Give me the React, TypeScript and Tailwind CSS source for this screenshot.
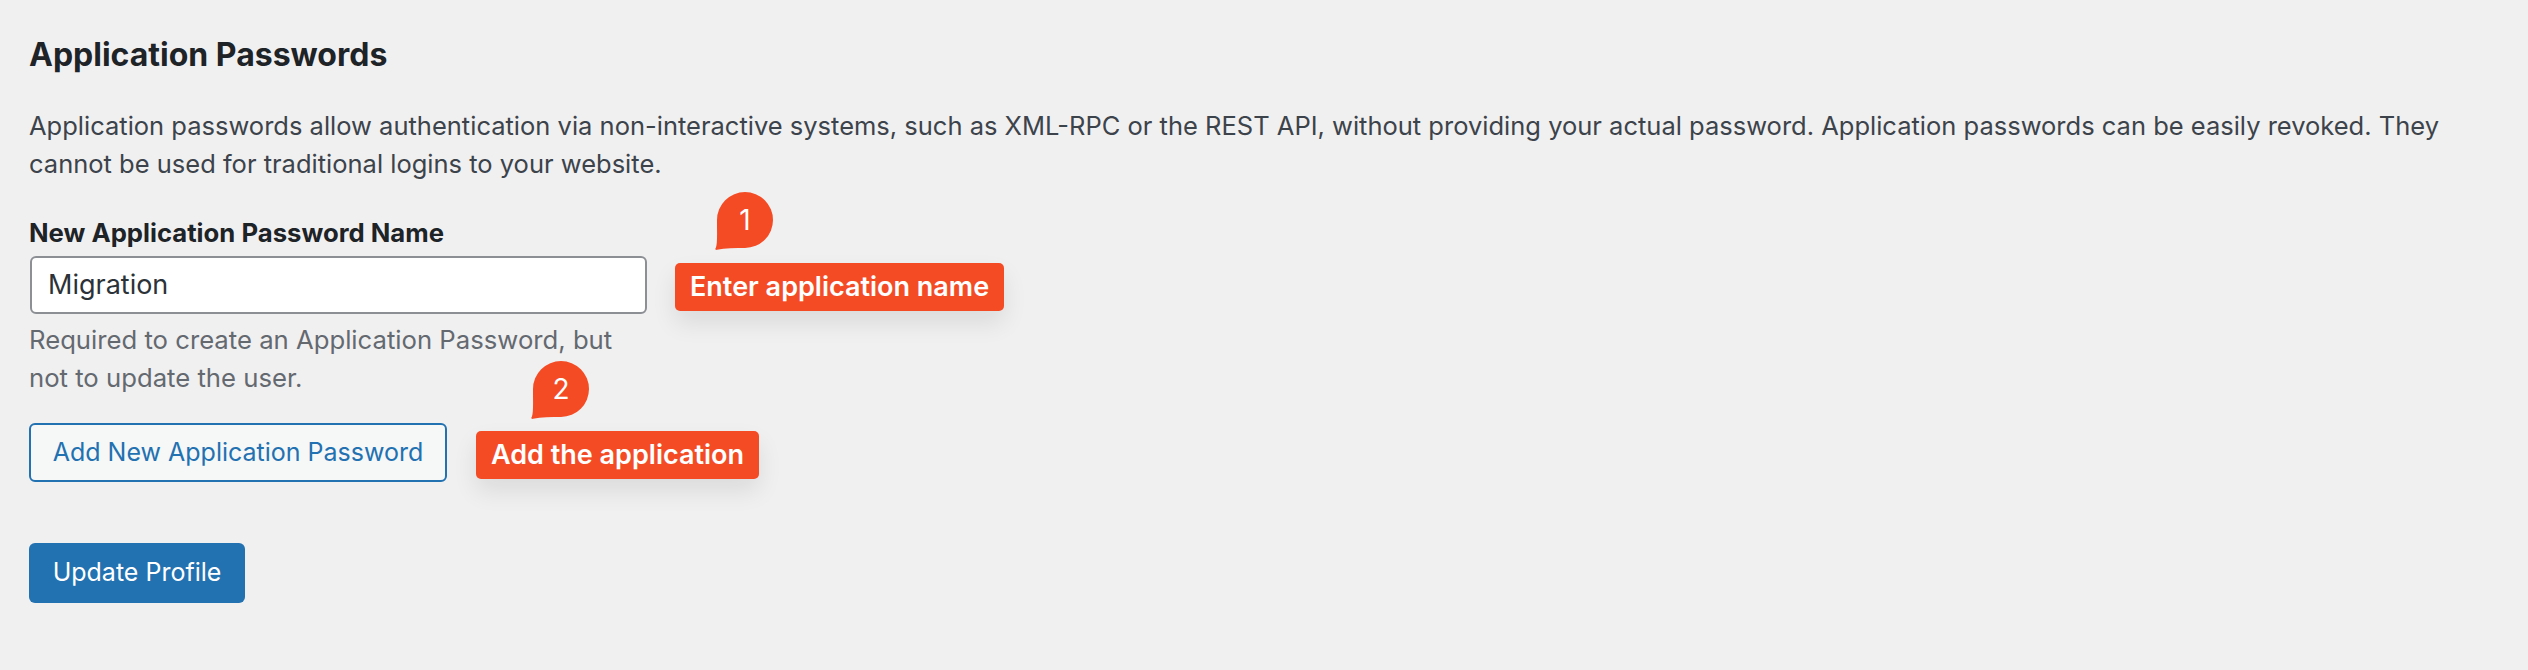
import React from "react";

const font = { fontFamily: "Inter, 'Noto Sans', 'Liberation Sans', sans-serif" };

function Bubble({ n, className }: { n: string; className: string }) {
  return (
    <div className={`absolute w-[58px] h-[58px] ${className}`}>
      <svg width="58" height="58" viewBox="0 0 58 58" className="absolute inset-0">
        <path
          d="M30 0 A28 28 0 0 1 58 28 A28 28 0 0 1 30 56 C20 56 10 56 2 57.8 C0.5 58.2 -0.3 57 0.8 56 C2.5 52 2 42 2 28 A28 28 0 0 1 30 0 Z"
          fill="#f44b25"
        />
      </svg>
      <div className="absolute left-[2px] top-0 w-[56px] h-[56px] flex items-center justify-center text-white text-[28px] leading-none">
        {n}
      </div>
    </div>
  );
}

function Callout({ text, n, bubbleClass }: { text: string; n: string; bubbleClass: string }) {
  return (
    <div className="relative">
      <Bubble n={n} className={bubbleClass} />
      <div className="h-[48px] px-[15px] rounded-[5px] bg-[#f44b25] text-white text-[27px] font-semibold leading-[48px] shadow-[0_12px_24px_rgba(0,0,0,0.09)] whitespace-nowrap">
        {text}
      </div>
    </div>
  );
}

export default function App() {
  return (
    <div style={font} className="w-[2528px] h-[670px] bg-[#f0f0f1] pl-[29px] pt-[35px] overflow-hidden">
      <h2 className="text-[32px] leading-[40px] font-bold text-[#1d2327]">Application Passwords</h2>
      <p className="mt-[32px] w-[2450px] text-[25.5px] leading-[38px] text-[#3c434a]">
        Application passwords allow authentication via non-interactive systems, such as XML-RPC or the REST API, without providing your actual password. Application passwords can be easily revoked. They cannot be used for traditional logins to your website.
      </p>
      <div className="mt-[35px] text-[25.7px] leading-[30px] font-bold text-[#1d2327]">New Application Password Name</div>
      <div className="mt-[8px] flex items-center">
        <div className="ml-[1px] w-[617px] h-[58px] rounded-[6px] border-2 border-[#8c8f94] bg-white flex items-center pl-[16px] text-[27px] text-[#2c3338]">
          Migration
        </div>
        <div className="ml-[28px] mt-[4px]">
          <Callout text="Enter application name" n="1" bubbleClass="left-[40px] top-[-71px]" />
        </div>
      </div>
      <p className="mt-[7px] w-[600px] text-[25.7px] leading-[38px] text-[#646970]">
        Required to create an Application Password, but not to update the user.
      </p>
      <div className="mt-[26px] flex items-center">
        <div className="w-[418px] h-[59px] rounded-[6px] border-2 border-[#2271b1] bg-[#f6f7f7] flex items-center justify-center text-[25px] text-[#2271b1]">
          Add New Application Password
        </div>
        <div className="ml-[29px] mt-[4px]">
          <Callout text="Add the application" n="2" bubbleClass="left-[55px] top-[-70px]" />
        </div>
      </div>
      <div className="mt-[61px] w-[216px] h-[60px] rounded-[6px] bg-[#2271b1] flex items-center justify-center text-[25px] text-white">
        Update Profile
      </div>
    </div>
  );
}
